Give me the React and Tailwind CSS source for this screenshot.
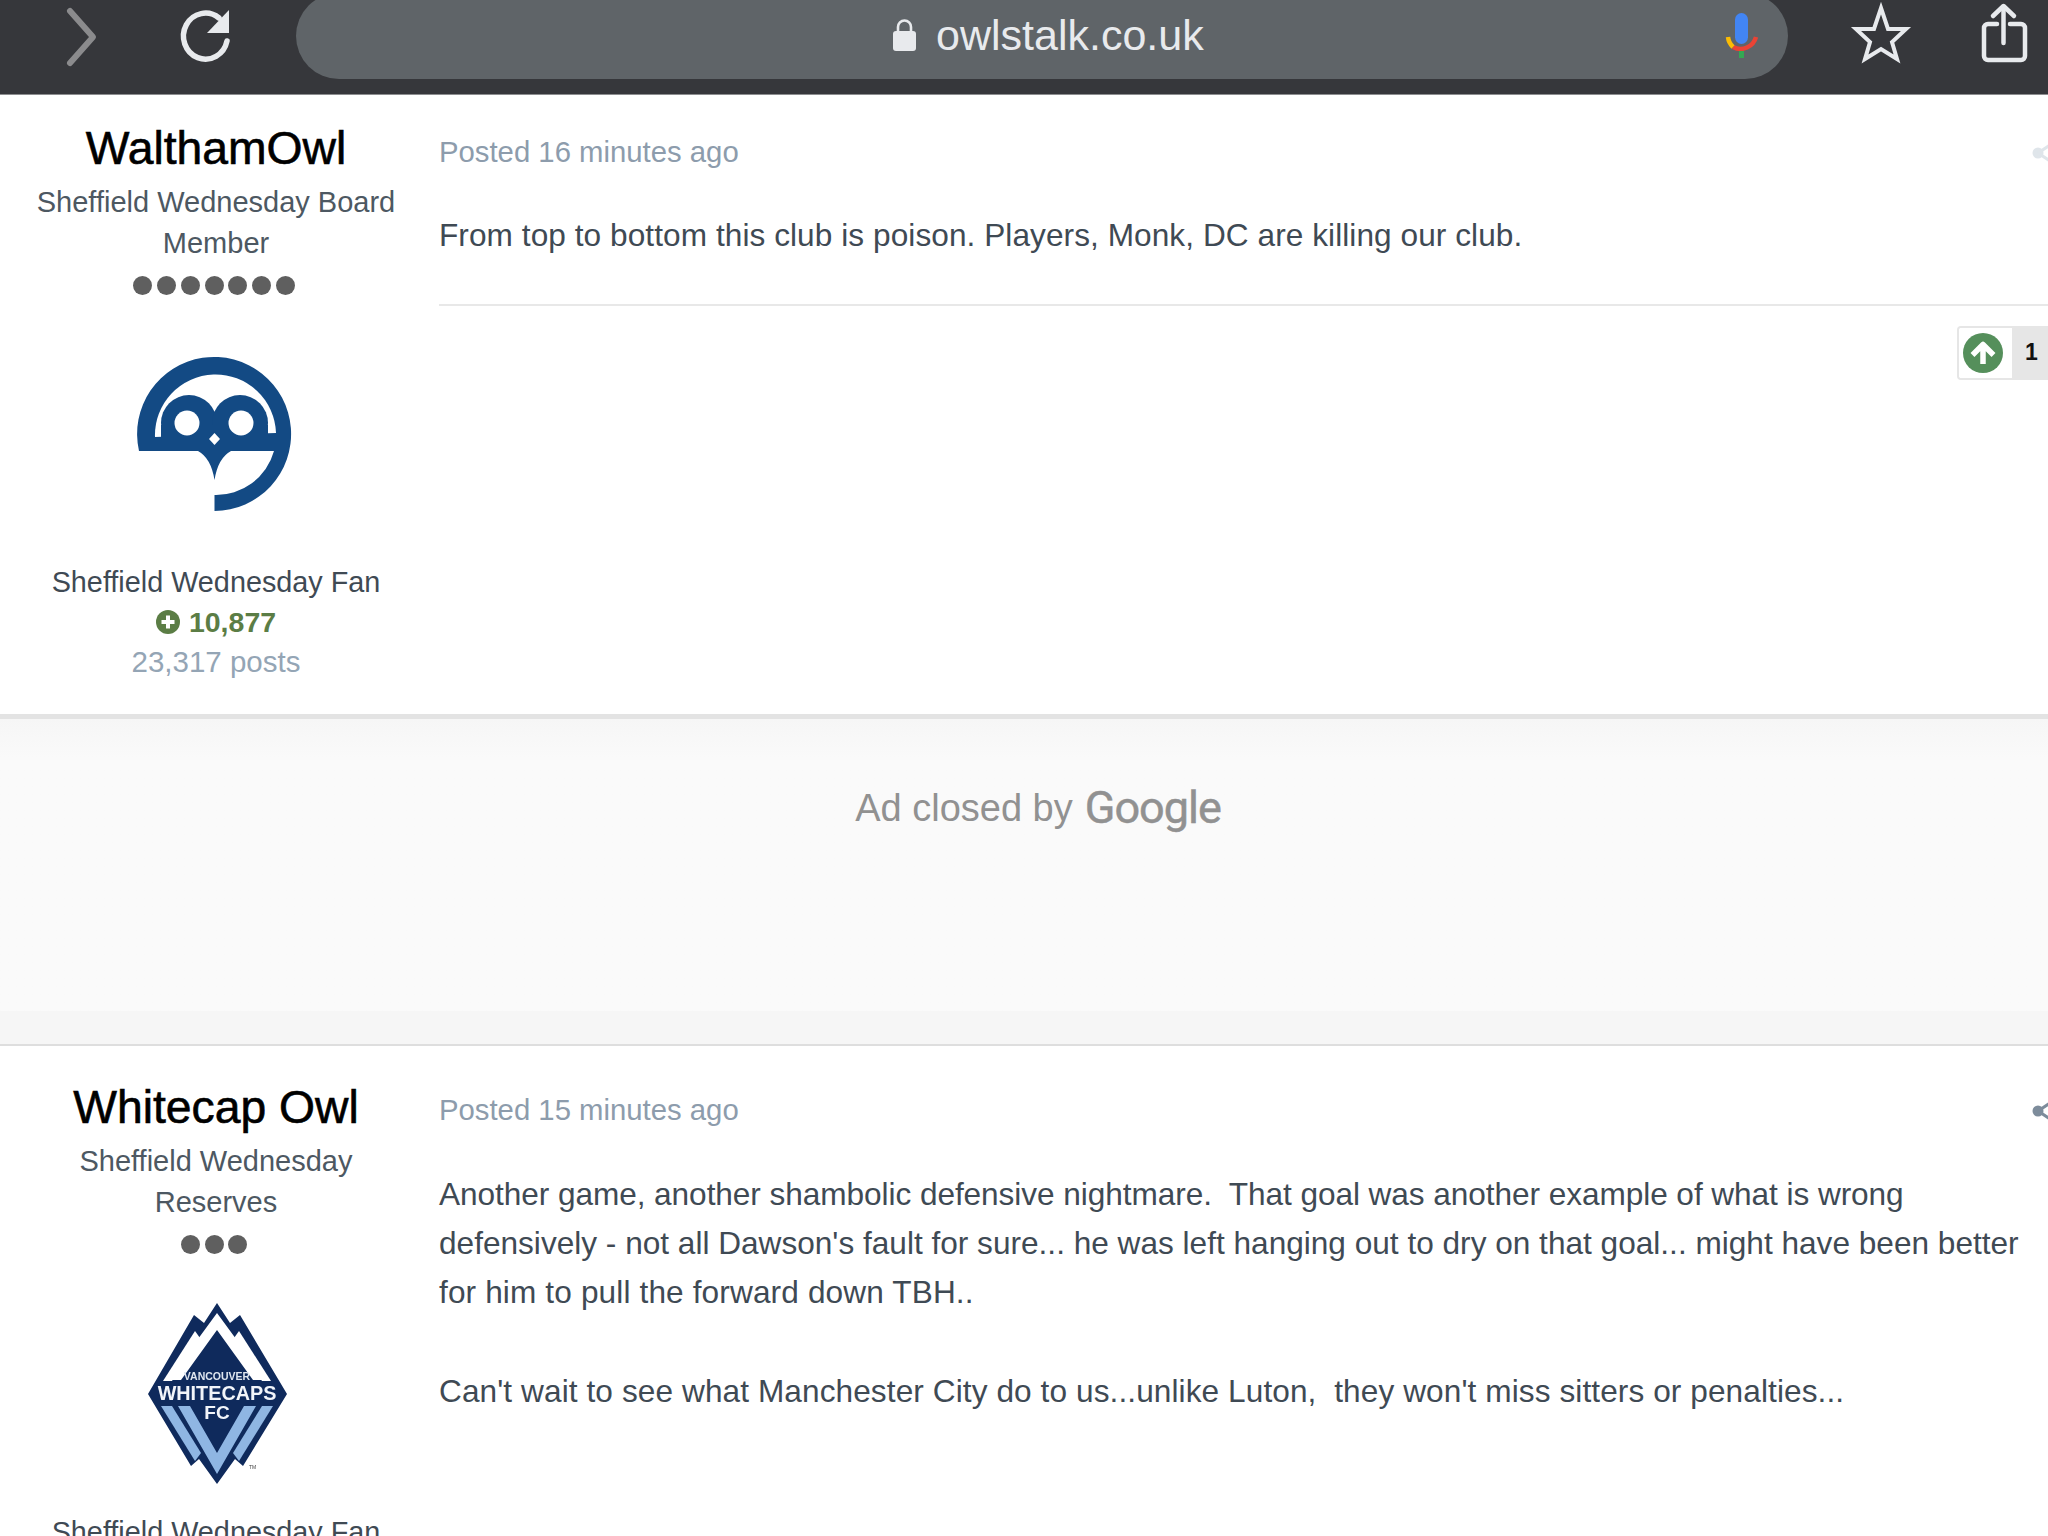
const sans = "font-['Liberation_Sans',Arial,sans-serif]";

function Toolbar() {
  return (
    <header className="flex h-[95px] shrink-0 items-start overflow-hidden border-b-[1px] border-[#8d8e90] bg-[#36373b]">
      <svg className="ml-[50px] h-[94px] w-[60px] shrink-0" viewBox="50 0 60 94" fill="none">
        <path d="M70 11 L93 37 L70 63" stroke="#8b8b8d" strokeWidth="6" strokeLinecap="round" strokeLinejoin="round" />
      </svg>
      <svg className="ml-[60px] h-[94px] w-[70px] shrink-0" viewBox="170 0 70 94" fill="none">
        <path d="M219 18 A22 23 0 1 0 227 41" stroke="#e8eaed" strokeWidth="5.5" strokeLinecap="round" />
        <path d="M229 10 V33 H207 Z" fill="#e8eaed" />
      </svg>
      <div className="ml-[56px] -mt-[7px] flex h-[86px] w-[1492px] shrink-0 items-center rounded-full bg-[#5f6468] pl-[596px]">
        <svg className="h-[34px] w-[25px] shrink-0" viewBox="892 20 25 34">
          <rect x="893" y="32" width="23" height="20" rx="3" fill="#e8eaed" />
          <path d="M898 33 V28 a6.5 6.5 0 0 1 13 0 V33" fill="none" stroke="#e8eaed" strokeWidth="2.6" />
        </svg>
        <span className={`${sans} ml-[19px] pb-[2px] text-[43px] leading-none text-[#e8eaed]`}>owlstalk.co.uk</span>
        <svg className="ml-[517px] h-[56px] w-[40px] shrink-0" viewBox="1720 8 40 56" fill="none">
          <rect x="1734" y="13" width="13" height="31" rx="6.5" fill="#4285f4" />
          <path d="M1732 47 A16 16 0 0 0 1755 37" stroke="#ea4335" strokeWidth="4.5" />
          <path d="M1727 37 A16 16 0 0 0 1732 47" stroke="#fbbc04" strokeWidth="4.5" />
          <rect x="1738" y="51" width="5" height="7" fill="#34a853" />
        </svg>
      </div>
      <svg className="ml-[52px] h-[94px] w-[85px] shrink-0" viewBox="1840 0 85 94" fill="none">
        <path d="M1881 8 L1888 29 L1906 29 L1892 42 L1897 59 L1881 49 L1865 59 L1870 42 L1856 29 L1874 29 Z" stroke="#e8eaed" strokeWidth="4" strokeLinejoin="miter" />
      </svg>
      <svg className="ml-[40px] h-[94px] w-[75px] shrink-0" viewBox="1965 0 75 94" fill="none" stroke="#e8eaed" strokeWidth="4.5">
        <path d="M1997 24 H1988 a4 4 0 0 0 -4 4 V56 a4 4 0 0 0 4 4 H2021 a4 4 0 0 0 4 -4 V28 a4 4 0 0 0 -4 -4 H2010" strokeLinecap="round" />
        <path d="M2003.5 43 V7" strokeLinecap="round" />
        <path d="M1993 16 L2003.5 6 L2014 16" strokeLinecap="round" strokeLinejoin="round" />
      </svg>
    </header>
  );
}

function Dots({ count, className }) {
  return (
    <div className={`flex shrink-0 justify-center gap-[4.8px] pr-[4px] ${className}`}>
      {Array.from({ length: count }).map((_, i) => (
        <span key={i} className="h-[19px] w-[19px] rounded-full bg-[#5f5f5f]" />
      ))}
    </div>
  );
}

function OwlLogo() {
  return (
    <svg className="mt-[45px] h-[200px] w-[240px] shrink-0 blur-[0.5px]" viewBox="96 340 240 200">
      <path
        d="M214.5 511 A77 77 0 1 0 139 451 L198 451 Q211 458 214.5 480 Q218 458 231 451 L274 451 A60 60 0 0 1 214.5 495 Z"
        fill="#134a84"
      />
      <path d="M155 437 A60 60 0 0 1 276 433 Z" fill="#ffffff" />
      <circle cx="189" cy="423" r="28" fill="#134a84" />
      <circle cx="240" cy="423" r="28" fill="#134a84" />
      <rect x="161" y="425" width="107" height="26" fill="#134a84" />
      <circle cx="187" cy="423" r="12.5" fill="#ffffff" />
      <circle cx="241" cy="423" r="12.5" fill="#ffffff" />
      <path d="M214.5 433 L220 439 L214.5 445 L209 439 Z" fill="#ffffff" />
    </svg>
  );
}

function WhitecapsLogo() {
  return (
    <svg className="mt-[27px] h-[220px] w-[200px] shrink-0 blur-[0.6px]" viewBox="116 1280 200 220">
      <path d="M217 1302 L230 1322 L240 1314 L287 1393 L243 1465 L235 1458 L217 1483 L199 1458 L191 1465 L148 1393 L194 1314 L204 1322 Z" fill="#0f2a5c" />
      <path d="M217 1315 L266 1382 L253 1382 L217 1332 L181 1382 L168 1382 Z" fill="#ffffff" transform="translate(0 -3)" />
      <path d="M195 1330 L200 1337 L172 1380 L163 1380 Z" fill="#ffffff" />
      <path d="M239 1330 L234 1337 L262 1380 L271 1380 Z" fill="#ffffff" />
      <path d="M178 1405 L190 1405 L217 1452 L244 1405 L256 1405 L217 1473 Z" fill="#8fb6e3" />
      <path d="M161 1405 L172 1405 L201 1452 L195 1460 Z" fill="#8fb6e3" />
      <path d="M273 1405 L262 1405 L233 1452 L239 1460 Z" fill="#8fb6e3" />
      <text x="217" y="1379" textAnchor="middle" fontFamily="Liberation Sans" fontWeight="700" fontSize="10.5" fill="#dfe6f0">VANCOUVER</text>
      <text x="217" y="1399" textAnchor="middle" fontFamily="Liberation Sans" fontWeight="700" fontSize="19.8" fill="#f2f5fa">WHITECAPS</text>
      <text x="217" y="1418" textAnchor="middle" fontFamily="Liberation Sans" fontWeight="700" fontSize="19" fill="#f2f5fa">FC</text>
      <text x="249" y="1468" fontFamily="Liberation Sans" fontSize="5" fill="#444">TM</text>
    </svg>
  );
}

function ShareStub({ color }) {
  return (
    <svg className="h-[28px] w-[18px] shrink-0" viewBox="0 0 18 28" fill="none">
      <circle cx="8" cy="15" r="5.5" fill={color} />
      <path d="M8 15 L20 7 M8 15 L20 23" stroke={color} strokeWidth="3" />
    </svg>
  );
}

function Reaction() {
  return (
    <div className="ml-auto mt-[20px] flex h-[54px] w-[91px] overflow-hidden rounded-l-[4px] border-2 border-r-0 border-[#e6e6e6]">
      <div className="flex w-[53px] items-center bg-white pl-[4px]">
        <svg className="h-[40px] w-[40px]" viewBox="0 0 40 40">
          <circle cx="20" cy="20" r="20" fill="#558f5b" />
          <path d="M20 31 V13 M9.5 22 L20 11.5 L30.5 22" fill="none" stroke="#ffffff" strokeWidth="5.5" strokeLinejoin="round" />
        </svg>
      </div>
      <div className={`${sans} flex flex-1 items-center justify-center bg-[#e6e6e6] pb-[2px] pl-[3px] text-[23px] font-bold text-[#111]`}>1</div>
    </div>
  );
}

function Name({ children }) {
  return <div className={`${sans} h-[56px] shrink-0 text-[46.3px] leading-[56px] text-black [-webkit-text-stroke:0.6px_#000]`}>{children}</div>;
}

function Rank({ lines }) {
  return (
    <div className="mt-[6px] shrink-0 text-[29px] leading-[41px] text-[#4d5862]">
      {lines.map((l) => (
        <div key={l}>{l}</div>
      ))}
    </div>
  );
}

function FanLine() {
  return <div className="text-[28.8px] leading-[40px] text-[#3f4a54]">Sheffield Wednesday Fan</div>;
}

function Stats() {
  return (
    <div className="mt-[22px] w-full shrink-0 text-center leading-[40px]">
      <FanLine />
      <div className="flex items-center justify-center gap-[9px] text-[28.5px] font-bold text-[#5b7d45]">
        <svg className="h-[24px] w-[24px]" viewBox="0 0 24 24">
          <circle cx="12" cy="12" r="12" fill="#5b7d45" />
          <path d="M12 5.5 V18.5 M5.5 12 H18.5" stroke="#ffffff" strokeWidth="4" />
        </svg>
        10,877
      </div>
      <div className="text-[29.5px] text-[#94a5b5]">23,317 posts</div>
    </div>
  );
}

function Posted({ children, share }) {
  return (
    <div className="flex h-[40px] items-center justify-between text-[29.3px] leading-[40px] text-[#8d9cac]">
      <span>{children}</span>
      <ShareStub color={share} />
    </div>
  );
}

const bodyCls = "whitespace-pre text-[31.6px] leading-[49.2px] text-[#3f4a54]";

function AdClosed() {
  return (
    <section className="flex h-[327px] shrink-0 flex-col border-b-2 border-[#dedede] bg-linear-to-b from-[#f6f6f6] to-[#fafafa] to-[12%]">
      <div className="flex flex-1 justify-center pl-[28px] pt-[61px]">
        <div className="flex h-[56px] items-center gap-[12px]">
          <span className="text-[38px] text-[#919191]">Ad closed by</span>
          <span className="font-['Roboto',sans-serif] text-[45px] tracking-[-1px] text-[#919191] [-webkit-text-stroke:0.5px_#919191]">Google</span>
        </div>
      </div>
      <div className="h-[33px] bg-[#f6f6f6]" />
    </section>
  );
}

export default function App() {
  return (
    <div className={`${sans} flex h-[1536px] w-[2048px] flex-col overflow-hidden bg-white`}>
      <Toolbar />
      <article className="flex h-[624px] shrink-0 border-b-[5px] border-[#e3e3e3]">
        <aside className="flex w-[432px] shrink-0 flex-col items-center pt-[25px] text-center">
          <Name>WalthamOwl</Name>
          <Rank lines={["Sheffield Wednesday Board", "Member"]} />
          <Dots count={7} className="mt-[12px]" />
          <OwlLogo />
          <Stats />
        </aside>
        <div className="min-w-0 flex-1 pl-[7px] pt-[37px]">
          <Posted share="#dfe5ea">Posted 16 minutes ago</Posted>
          <p className={`${bodyCls} mt-[39px] tracking-[0.065px]`}>From top to bottom this club is poison. Players, Monk, DC are killing our club.</p>
          <div className="mt-[44px] h-[2px] bg-[#e8e8e8]" />
          <Reaction />
        </div>
      </article>
      <AdClosed />
      <article className="flex min-h-0 flex-1 overflow-hidden">
        <aside className="flex w-[432px] shrink-0 flex-col items-center pt-[33px] text-center">
          <Name>Whitecap Owl</Name>
          <Rank lines={["Sheffield Wednesday", "Reserves"]} />
          <Dots count={3} className="mt-[12px]" />
          <WhitecapsLogo />
          <div className="mt-[11px] w-full shrink-0 text-center">
            <FanLine />
          </div>
        </aside>
        <div className="min-w-0 flex-1 pl-[7px] pt-[44px]">
          <Posted share="#7d8c9b">Posted 15 minutes ago</Posted>
          <div className={`${bodyCls} mt-[40px]`}>
            <p className="tracking-[-0.065px]">Another game, another shambolic defensive nightmare.  That goal was another example of what is wrong</p>
            <p>defensively - not all Dawson's fault for sure... he was left hanging out to dry on that goal... might have been better</p>
            <p className="tracking-[0.13px]">for him to pull the forward down TBH..</p>
            <p>&nbsp;</p>
            <p className="tracking-[0.09px]">Can't wait to see what Manchester City do to us...unlike Luton,  they won't miss sitters or penalties...</p>
          </div>
        </div>
      </article>
    </div>
  );
}
